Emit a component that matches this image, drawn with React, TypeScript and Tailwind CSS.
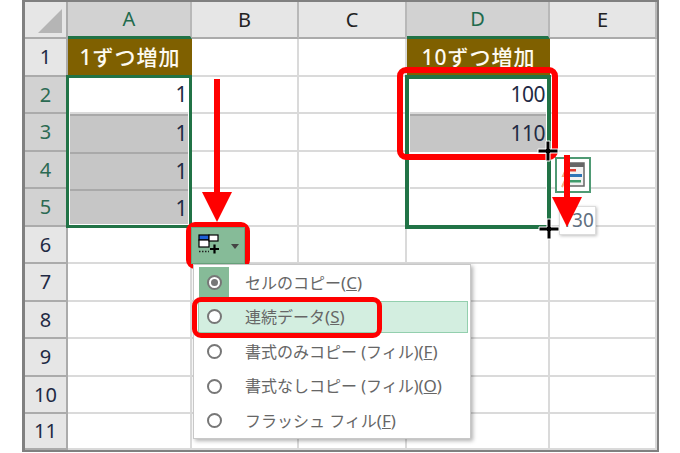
const columns = ['A', 'B', 'C', 'D', 'E']
const rows = [1, 2, 3, 4, 5, 6, 7, 8, 9, 10, 11]

const cells: Record<string, { text: string; kind?: 'head' | 'gray' }> = {
  A1: { text: '1ずつ増加', kind: 'head' },
  A2: { text: '1' },
  A3: { text: '1', kind: 'gray' },
  A4: { text: '1', kind: 'gray' },
  A5: { text: '1', kind: 'gray' },
  D1: { text: '10ずつ増加', kind: 'head' },
  D2: { text: '100' },
  D3: { text: '110', kind: 'gray' },
}

const activeCols = ['A', 'D']
const activeRows = [2, 3, 4, 5]

const menuItems = [
  { label: 'セルのコピー', key: 'C' },
  { label: '連続データ', key: 'S' },
  { label: '書式のみコピー (フィル)', key: 'F' },
  { label: '書式なしコピー (フィル)', key: 'O' },
  { label: 'フラッシュ フィル', key: 'F' },
]

function Cell({ id }: { id: string }) {
  const cell = cells[id]
  if (cell?.kind === 'head') {
    return (
      <div className="flex items-center justify-center bg-[#7f6000] text-[21px] font-medium tracking-[1px] text-[#fdfaf0]">
        {cell.text}
      </div>
    )
  }
  if (cell?.kind === 'gray') {
    return (
      <div className="flex items-center justify-end border-t-2 border-[#a9a9a9] bg-[#c6c6c6] pr-[5px] text-[21px] tracking-[-0.5px] text-[#1f2a44]">
        {cell.text}
      </div>
    )
  }
  return (
    <div className="flex items-center justify-end border-r-2 border-b-2 border-[#dadada] pr-[3px] text-[21px] tracking-[-0.5px] text-[#1f2a44]">
      {cell?.text}
    </div>
  )
}

function DownArrow({ className, shaft }: { className: string; shaft: string }) {
  return (
    <div className={'absolute flex flex-col items-center ' + className}>
      <div className={'w-[6px] bg-[#ff0000] ' + shaft} />
      <svg width="30" height="30" viewBox="0 0 30 30" className="block">
        <path d="M0 0 H30 L15 30 Z" fill="#ff0000" />
      </svg>
    </div>
  )
}

function Crosshair({ className }: { className: string }) {
  return (
    <svg width="22" height="22" viewBox="0 0 22 22" className={'absolute ' + className}>
      <path d="M9 1 H13 V9 H21 V13 H13 V21 H9 V13 H1 V9 H9 Z" fill="#000" stroke="#fff" strokeWidth="1" />
    </svg>
  )
}

function FillOptionsIcon() {
  return (
    <svg width="34" height="28" viewBox="0 0 34 28">
      <rect x="2" y="3" width="10" height="5" fill="#1d5fd6" stroke="#000" strokeWidth="1.2" />
      <rect x="2" y="8" width="10" height="7" fill="#fff" stroke="#000" strokeWidth="1.2" />
      <rect x="12" y="3" width="9" height="6" fill="#fff" stroke="#000" strokeWidth="1.2" />
      <path d="M2 19.5 H12" stroke="#222" strokeWidth="1.6" strokeDasharray="1.5 1.5" />
      <path d="M17.5 12.5 V21.5 M13 17 H22" stroke="#000" strokeWidth="2.2" />
    </svg>
  )
}

function QuickAnalysisIcon() {
  return (
    <svg width="24" height="26" viewBox="0 0 24 26">
      <rect x="6" y="1" width="17" height="23" fill="#f2f2f2" stroke="#666" strokeWidth="1.5" />
      <rect x="6" y="1" width="17" height="4" fill="#666" />
      <rect x="9" y="7" width="6" height="2.5" fill="#e03c31" />
      <rect x="6" y="12" width="15" height="3" fill="#2e75b6" />
      <rect x="9" y="18" width="11" height="2.5" fill="#3f9b6c" />
      <path d="M7 3 L2 14 H6 L1 25" fill="none" stroke="#f0b080" strokeWidth="2" />
    </svg>
  )
}

export default function App() {
  return (
    <div className="relative h-[453px] w-[680px] overflow-hidden bg-white font-['Noto_Sans','Noto_Sans_CJK_JP',sans-serif]">
      <div className="ml-[22px] grid h-[452px] w-[637px] grid-cols-[43px_124px_107px_108px_143px_107px] grid-rows-[37px_38px_37px_38px_37px_38px_37px_38px_37px_38px_37px_36px] border-t-2 border-r-2 border-b-2 border-l-[3px] border-[#808080]">
        <div className="flex items-end justify-end border-r-2 border-b-2 border-[#ababab] bg-[#e6e6e6] p-[4px]">
          <div className="h-0 w-0 border-b-[24px] border-l-[24px] border-b-[#b5b5b5] border-l-transparent" />
        </div>
        {columns.map((c) => (
          <div
            key={c}
            className={
              'flex items-center justify-center border-r-2 text-[20px] ' +
              (activeCols.includes(c)
                ? 'border-b-[3px] border-r-[#b8b8b8] border-b-[#217346] bg-[#d2d2d2] text-[#1f6b4d]'
                : 'border-b-2 border-r-[#b8b8b8] border-b-[#ababab] bg-[#e6e6e6] text-[#222]')
            }
          >
            {c}
          </div>
        ))}
        {rows.map((r) => (
          <div key={r} className="contents">
            <div
              className={
                'flex items-center justify-center border-r-2 border-b-2 border-r-[#ababab] border-b-[#ababab] text-[20px] ' +
                (activeRows.includes(r) ? 'bg-[#d2d2d2] text-[#2b6a52]' : 'bg-[#e6e6e6] text-[#1f2a44]')
              }
            >
              {r}
            </div>
            {columns.map((c) => (
              <Cell key={c} id={c + r} />
            ))}
          </div>
        ))}
      </div>

      {/* selections */}
      <div className="absolute top-[75px] left-[66px] h-[153px] w-[126px] border-[3px] border-[#217346] shadow-[inset_0_0_0_1px_#fff]" />
      <div className="absolute top-[75px] left-[405px] h-[154px] w-[146px] border-[4px] border-[#217346] shadow-[inset_0_0_0_1px_#fff]" />

      {/* highlight boxes */}
      <div className="absolute top-[67px] left-[397px] h-[93px] w-[161px] rounded-[9px] border-[6px] border-[#ff0000]" />
      <div className="absolute top-[222px] left-[186px] h-[47px] w-[64px] rounded-[9px] border-[5px] border-[#ff0000]" />

      <DownArrow className="top-[79px] left-[202px] w-[30px]" shaft="h-[113px]" />

      {/* fill options button */}
      <div className="absolute top-[227px] left-[191px] flex h-[37px] w-[54px] items-center border border-[#6aa67f] bg-[#86bb98] pl-[5px]">
        <FillOptionsIcon />
        <div className="mt-[2px] h-0 w-0 border-x-[4px] border-t-[5px] border-x-transparent border-t-[#444]" />
      </div>

      {/* autofill menu */}
      <div className="absolute top-[264px] left-[193px] flex h-[175px] w-[278px] flex-col border border-[#c8c8c8] bg-white shadow-[2px_2px_4px_rgba(0,0,0,0.3)]">
        {menuItems.map((item, i) => (
          <div
            key={item.label}
            className={
              'mx-[4px] my-[1px] mr-[2px] flex h-[33px] items-center border text-[16px] text-[#666] ' +
              (i === 1 ? 'border-[#93cfae] bg-[#d3eee0]' : 'border-transparent')
            }
          >
            <div className={'flex h-full w-[30px] items-center justify-center ' + (i === 0 ? 'bg-[#86bb98]' : '')}>
              <div className="flex h-[15px] w-[15px] items-center justify-center rounded-full border-2 border-[#777] bg-white">
                {i === 0 && <div className="h-[7px] w-[7px] rounded-full bg-[#777]" />}
              </div>
            </div>
            <span className="ml-[16px] whitespace-nowrap">
              {item.label}
              <span className="text-[17px]">
                (<span className="underline">{item.key}</span>)
              </span>
            </span>
          </div>
        ))}
      </div>
      <div className="absolute top-[297px] left-[192px] h-[41px] w-[190px] rounded-[9px] border-[5px] border-[#ff0000]" />

      {/* quick analysis tag */}
      <div className="absolute top-[157px] left-[555px] flex h-[36px] w-[36px] items-center justify-center border-2 border-[#4f9a74] bg-white">
        <QuickAnalysisIcon />
      </div>

      {/* fill tooltip */}
      <div className="absolute top-[206px] left-[559px] flex h-[29px] w-[37px] items-center justify-center border border-[#dcdcdc] bg-white text-[19px] text-[#5f6f80] shadow-[1px_1px_3px_rgba(0,0,0,0.25)]">
        130
      </div>

      <DownArrow className="top-[155px] left-[552px] w-[30px]" shaft="h-[42px]" />

      <Crosshair className="top-[140px] left-[537px]" />
      <Crosshair className="top-[218px] left-[538px]" />
    </div>
  )
}
